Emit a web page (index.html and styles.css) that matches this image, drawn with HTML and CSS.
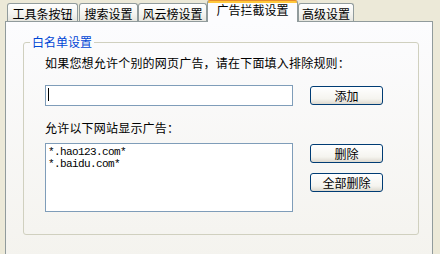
FILE: index.html
```html
<!DOCTYPE html>
<html>
<head>
<meta charset="utf-8">
<link rel="stylesheet" href="styles.css">
</head>
<body>
<div class="window">
  <div class="tabs">
    <div class="tab t1">工具条按钮</div>
    <div class="tab t2">搜索设置</div>
    <div class="tab t3">风云榜设置</div>
    <div class="tab active t4">广告拦截设置</div>
    <div class="tab t5">高级设置</div>
  </div>
  <div class="panel">
    <fieldset class="group">
      <legend class="group-title">白名单设置</legend>
      <div class="group-body">
        <p class="label label-first">如果您想允许个别的网页广告，请在下面填入排除规则：</p>
        <div class="row add-row">
          <div class="textbox"><span class="caret"></span></div>
          <button class="btn btn-add">添加</button>
        </div>
        <p class="label label-second">允许以下网站显示广告：</p>
        <div class="row list-row">
          <div class="listbox">
            <div class="item">*.hao123.com*</div>
            <div class="item">*.baidu.com*</div>
          </div>
          <div class="btn-col">
            <button class="btn">删除</button>
            <button class="btn">全部删除</button>
          </div>
        </div>
      </div>
    </fieldset>
  </div>
</div>
</body>
</html>
```

FILE: styles.css
```css
html, body {
  margin: 0;
  padding: 0;
}
body {
  width: 440px;
  height: 254px;
  overflow: hidden;
  background: #ECE9D8;
  font-family: "Noto Sans CJK SC", "Noto Sans", sans-serif;
  font-size: 12px;
  color: #000;
}
.window {
  padding-left: 5px;
}
.tabs {
  display: flex;
  align-items: flex-end;
  height: 21px;
  padding-left: 2px;
}
.tab {
  box-sizing: border-box;
  height: 18px;
  border: 1px solid #919B9C;
  border-bottom: none;
  border-radius: 3px 3px 0 0;
  background: linear-gradient(#FFFFFF, #F3F3EF 60%, #E6E5DE);
  padding-top: 3px;
  line-height: 14px;
  text-align: center;
  white-space: nowrap;
}
.t1 { width: 71px; }
.t2 { width: 59px; margin-left: 1px; }
.t3 { width: 69px; }
.t4 { width: 91px; }
.t5 { width: 56px; }
.tab.active {
  position: relative;
  z-index: 1;
  height: 22px;
  margin-bottom: -1px;
  border-top: 1px solid #E68B2C;
  background: linear-gradient(#FFC83C 0, #FFC83C 2px, #FCFCFE 2px);
  padding-top: 2px;
}
.panel {
  box-sizing: border-box;
  width: 428px;
  height: 240px;
  border: 1px solid #919B9C;
  background: linear-gradient(#FCFCFE, #F4F3EE);
  overflow: hidden;
}
.group {
  margin: 13px 13px 0 17px;
  padding: 0 0 22px 0;
  border: 1px solid #D0D0BF;
  border-radius: 3px;
  min-width: 0;
}
.group-title {
  margin-left: 6px;
  padding: 0 2px;
  line-height: 14px;
  color: #0046D5;
}
.group-body {
  padding-left: 21px;
}
.label {
  margin: 0;
  line-height: 14px;
  white-space: nowrap;
  letter-spacing: 0.2px;
}
.label-first { margin-top: 7px; }
.label-second { margin-top: 15px; }
.row {
  display: grid;
  grid-template-columns: 248px 73px;
  column-gap: 17px;
  align-items: start;
}
.add-row { margin-top: 15px; }
.list-row { margin-top: 8px; }
.textbox {
  box-sizing: border-box;
  height: 21px;
  border: 1px solid #7F9DB9;
  background: #FFFFFF;
  padding: 2px 0 0 2px;
}
.caret {
  display: block;
  width: 1px;
  height: 13px;
  background: #000;
}
.btn {
  box-sizing: border-box;
  width: 73px;
  height: 19px;
  margin: 1px 0 0 0;
  padding: 0;
  border: 1px solid #003C74;
  border-radius: 3px;
  background: linear-gradient(#FFFFFF, #F5F4EF 70%, #DDD9CF);
  font-family: "Noto Sans CJK SC", "Noto Sans", sans-serif;
  font-size: 12px;
  line-height: 15px;
  color: #000;
}
.btn-col {
  display: flex;
  flex-direction: column;
  gap: 10px;
  align-items: flex-start;
}
.btn-col .btn:last-child { margin-top: 0; }
.listbox {
  box-sizing: border-box;
  height: 69px;
  border: 1px solid #7F9DB9;
  background: #FFFFFF;
  padding: 2px 2px 0 2px;
}
.item {
  font-family: "Liberation Mono", "DejaVu Sans Mono", monospace;
  font-size: 11px;
  letter-spacing: -0.6px;
  line-height: 12px;
  color: #000;
}
```
